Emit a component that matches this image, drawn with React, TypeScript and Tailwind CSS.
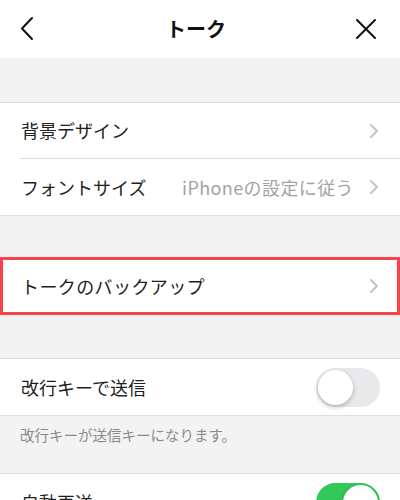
import React from "react";

const Chevron = () => (
  <svg width="12" height="16" viewBox="0 0 12 16" className="shrink-0">
    <path d="M3 2 L9 8 L3 14" fill="none" stroke="#c4c4c7" strokeWidth="2" strokeLinecap="round" strokeLinejoin="round" />
  </svg>
);

const Toggle = ({ on }: { on: boolean }) => (
  <div
    className={`relative w-[64px] h-[39px] rounded-full shrink-0 ${on ? "bg-[#34c759]" : "bg-[#e9e9ec]"}`}
  >
    <div
      className={`absolute top-[2px] w-[35px] h-[35px] rounded-full bg-white shadow-[0_2px_5px_rgba(0,0,0,0.25)] ${on ? "right-[2px]" : "left-[2px]"}`}
    />
  </div>
);

export default function App() {
  return (
    <div
      className="w-[400px] h-[500px] overflow-hidden bg-[#f3f3f3] text-[#1e1e1e]"
      style={{ fontFamily: '"Noto Sans CJK JP", "Noto Sans", sans-serif' }}
    >
      {/* header */}
      <div className="h-[58px] bg-white flex items-center justify-between px-[18px]">
        <svg width="20" height="26" viewBox="0 0 20 26">
          <path d="M14 2 L4 12.5 L14 23" fill="none" stroke="#111" strokeWidth="2" strokeLinecap="round" strokeLinejoin="round" />
        </svg>
        <div className="text-[20px] font-bold leading-none text-[#111]">トーク</div>
        <svg width="24" height="24" viewBox="0 0 24 24" className="mr-[4px]">
          <path d="M3 3 L21 21 M21 3 L3 21" fill="none" stroke="#111" strokeWidth="2" strokeLinecap="round" />
        </svg>
      </div>

      <div className="h-[44px]" />

      {/* section 1 */}
      <div className="bg-white border-y border-[#dfdfdf]">
        <div className="h-[55px] flex items-center justify-between pl-[21px] pr-[20px]">
          <span className="text-[18px]">背景デザイン</span>
          <Chevron />
        </div>
        <div className="ml-[20px] h-px bg-[#dcdcdc]" />
        <div className="h-[56px] flex items-center justify-between pl-[21px] pr-[20px]">
          <span className="text-[18px]">フォントサイズ</span>
          <div className="flex items-center gap-[14px]">
            <span className="text-[18px] tracking-[0.4px] text-[#a3a3a3]">iPhoneの設定に従う</span>
            <Chevron />
          </div>
        </div>
      </div>

      <div className="h-[41px]" />

      {/* highlighted backup row */}
      <div className="h-[58px] bg-white border-[3px] border-[#f6434a] flex items-center justify-between pl-[18px] pr-[17px]">
        <span className="text-[18px] tracking-[0.4px]">トークのバックアップ</span>
        <Chevron />
      </div>

      <div className="h-[43px]" />

      {/* enter to send */}
      <div className="bg-white border-y border-[#dfdfdf] h-[58px] flex items-center justify-between pl-[21px] pr-[20px]">
        <span className="text-[18px]">改行キーで送信</span>
        <Toggle on={false} />
      </div>
      <div className="h-[57px] px-[20px] pt-[6px]">
        <span className="text-[14.5px] text-[#8a8a8a]">改行キーが送信キーになります。</span>
      </div>

      {/* auto resend */}
      <div className="bg-white border-t border-[#dfdfdf] h-[58px] flex items-center justify-between pl-[21px] pr-[20px]">
        <span className="text-[18px]">自動再送</span>
        <Toggle on={true} />
      </div>
    </div>
  );
}
